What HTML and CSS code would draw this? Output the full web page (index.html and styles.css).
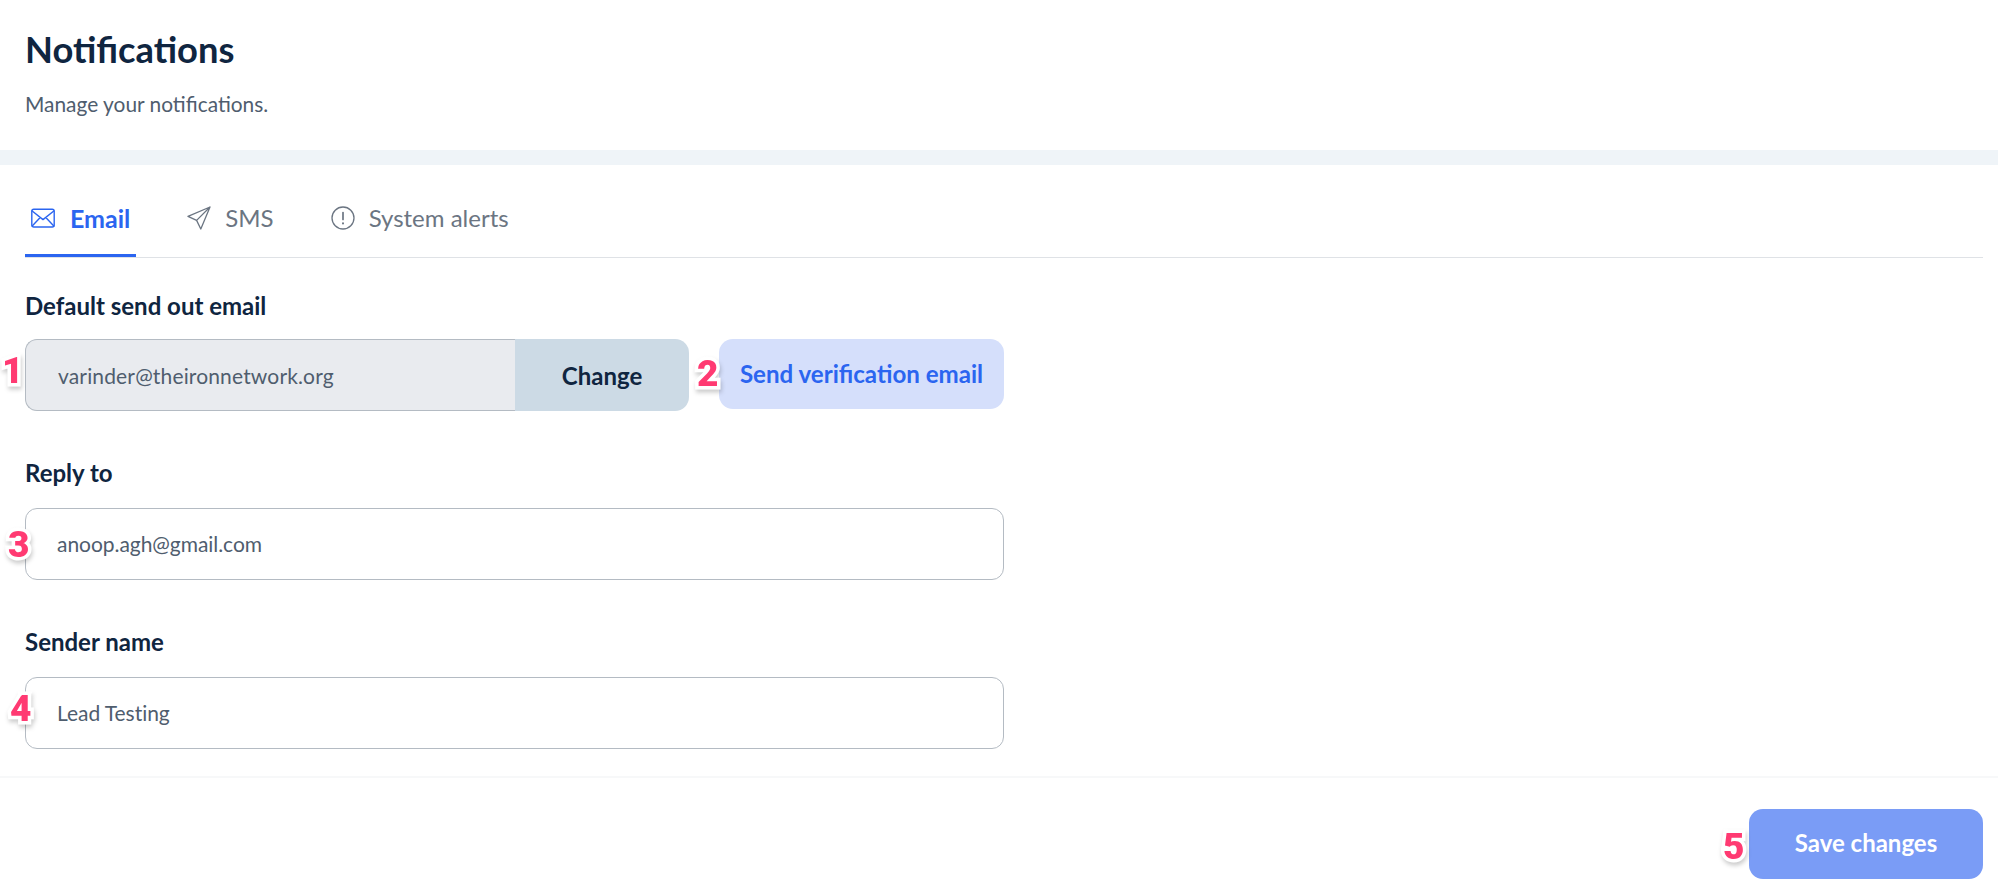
FILE: index.html
```html
<!DOCTYPE html>
<html lang="en">
<head>
<meta charset="utf-8">
<title>Notifications</title>
<link rel="stylesheet" href="styles.css">
</head>
<body>
<header class="page-head">
  <h1 class="page-title">Notifications</h1>
  <p class="page-sub">Manage your notifications.</p>
</header>
<main class="panel">
  <nav class="tabs">
    <a class="tab tab-active">
      <svg class="tab-icon" viewBox="0 0 24 24" fill="none" stroke="currentColor" stroke-width="1.4" stroke-linejoin="round" stroke-linecap="round"><rect x="0.8" y="3.2" width="22.4" height="17.8" rx="2"/><path d="M1.2 5l10.8 8.6L22.8 5M1.2 20l8-8.4M22.8 20l-8-8.4"/></svg>
      <span>Email</span>
    </a>
    <a class="tab">
      <svg class="tab-icon" viewBox="0 0 24 24" fill="none" stroke="currentColor" stroke-width="1.3" stroke-linejoin="round" stroke-linecap="round"><path d="M23 1L1 10.4l8.6 4 4.2 8.6L23 1zM23 1L9.6 14.4"/></svg>
      <span>SMS</span>
    </a>
    <a class="tab">
      <svg class="tab-icon" viewBox="0 0 24 24" fill="none" stroke="currentColor" stroke-width="1.3" stroke-linecap="round"><circle cx="12" cy="12" r="11"/><path d="M12 6.5v7" stroke-width="1.7"/><path d="M12 17.2v.2" stroke-width="2"/></svg>
      <span>System alerts</span>
    </a>
  </nav>
  <form class="form">
    <section class="field">
      <div class="label">Default send out email</div>
      <div class="row">
        <div class="group">
          <span class="marker marker-1">1</span>
          <div class="group-value">varinder@theironnetwork.org</div>
          <div class="group-btn">Change</div>
        </div>
        <div class="verify">
          <span class="marker marker-2">2</span>
          Send verification email
        </div>
      </div>
    </section>
    <section class="field">
      <div class="label">Reply to</div>
      <div class="input">
        <span class="marker marker-3">3</span>
        anoop.agh@gmail.com
      </div>
    </section>
    <section class="field">
      <div class="label">Sender name</div>
      <div class="input">
        <span class="marker marker-4">4</span>
        Lead Testing
      </div>
    </section>
  </form>
  <footer class="actions">
    <div class="save">
      <span class="marker marker-5">5</span>
      Save changes
    </div>
  </footer>
</main>
</body>
</html>
```

FILE: styles.css
```css
* { box-sizing: border-box; }
html, body { margin: 0; padding: 0; background: #fff; }
body {
  font-family: Lato, "Open Sans", sans-serif;
  color: #0f2540;
  height: 894px;
  overflow: hidden;
}
.page-head {
  height: 150px;
  padding: 26px 25px 0;
}
.page-title {
  margin: 0;
  font-size: 36.3px;
  line-height: 46px;
  font-weight: 700;
  color: #0f2540;
}
.page-sub {
  margin: 20px 0 0;
  font-size: 20.9px;
  line-height: 24px;
  color: #4f5d6e;
}
.panel {
  border-top: 15px solid #eff4f8;
}
.tabs {
  display: flex;
  gap: 45px;
  height: 93px;
  margin: 0 15px 0 25px;
  border-bottom: 1px solid #dfe2e6;
}
.tab {
  display: flex;
  align-items: center;
  gap: 14px;
  height: 92px;
  padding: 16px 6px 0;
  font-size: 24px;
  color: #6b7582;
  border-bottom: 3px solid transparent;
}
.tab-icon { width: 24px; height: 24px; flex: none; }
.tab-active {
  gap: 15px;
  font-size: 25px;
  color: #2b65f0;
  font-weight: 700;
  border-bottom-color: #2b65f0;
}
.form {
  width: 1004px;
  padding: 0 0 0 25px;
}
.field { margin-top: 34px; }
.field + .field { margin-top: 48px; }
.label {
  font-size: 24px;
  line-height: 27px;
  font-weight: 700;
  color: #0f2540;
  margin-bottom: 20px;
}
.field + .field .label { margin-bottom: 22px; }
.row {
  display: flex;
  align-items: flex-start;
  gap: 30px;
}
.group {
  position: relative;
  display: flex;
  width: 664px;
  height: 72px;
}
.group-value {
  flex: 1;
  display: flex;
  align-items: center;
  padding-left: 32px;
  font-size: 21px;
  letter-spacing: 0.15px;
  color: #4f5d6e;
  background: #e9ebef;
  border: 1px solid #b4bbc3;
  border-right: 0;
  border-radius: 12px 0 0 12px;
}
.group-btn {
  width: 174px;
  display: flex;
  align-items: center;
  justify-content: center;
  font-size: 24px;
  font-weight: 700;
  color: #0f2540;
  background: #ccdae5;
  border-radius: 0 14px 14px 0;
}
.verify {
  position: relative;
  flex: 1;
  height: 70px;
  display: flex;
  align-items: center;
  justify-content: center;
  padding-bottom: 2px;
  font-size: 24.1px;
  font-weight: 700;
  color: #2b65f0;
  background: #d5dffb;
  border-radius: 14px;
}
.input {
  position: relative;
  height: 72px;
  display: flex;
  align-items: center;
  padding: 0 0 2px 31px;
  font-size: 21px;
  letter-spacing: -0.05px;
  color: #4f5d6e;
  background: #fff;
  border: 1px solid #b4bbc3;
  border-radius: 12px;
}
.actions {
  display: flex;
  justify-content: flex-end;
  margin-top: 27px;
  padding: 31px 15px 0 0;
  border-top: 2px solid #f7f8f9;
}
.save {
  position: relative;
  width: 234px;
  height: 70px;
  display: flex;
  align-items: center;
  justify-content: center;
  padding-bottom: 3px;
  font-size: 24px;
  font-weight: 700;
  color: #fff;
  background: #7a9cf6;
  border-radius: 14px;
}
.marker {
  position: absolute;
  font-family: Roboto, Inter, sans-serif;
  font-size: 37px;
  line-height: 38px;
  font-weight: 900;
  color: #ff3a72;
  -webkit-text-stroke: 7px #fff;
  paint-order: stroke fill;
  filter: drop-shadow(1px 3px 2px rgba(0, 0, 0, 0.2));
}
.marker-1 { left: -23px; top: 13px; }
.marker-2 { left: -22px; top: 16px; }
.marker-3 { left: -18px; top: 17px; }
.marker-4 { left: -16px; top: 12px; }
.marker-5 { left: -26px; top: 19px; }
```
